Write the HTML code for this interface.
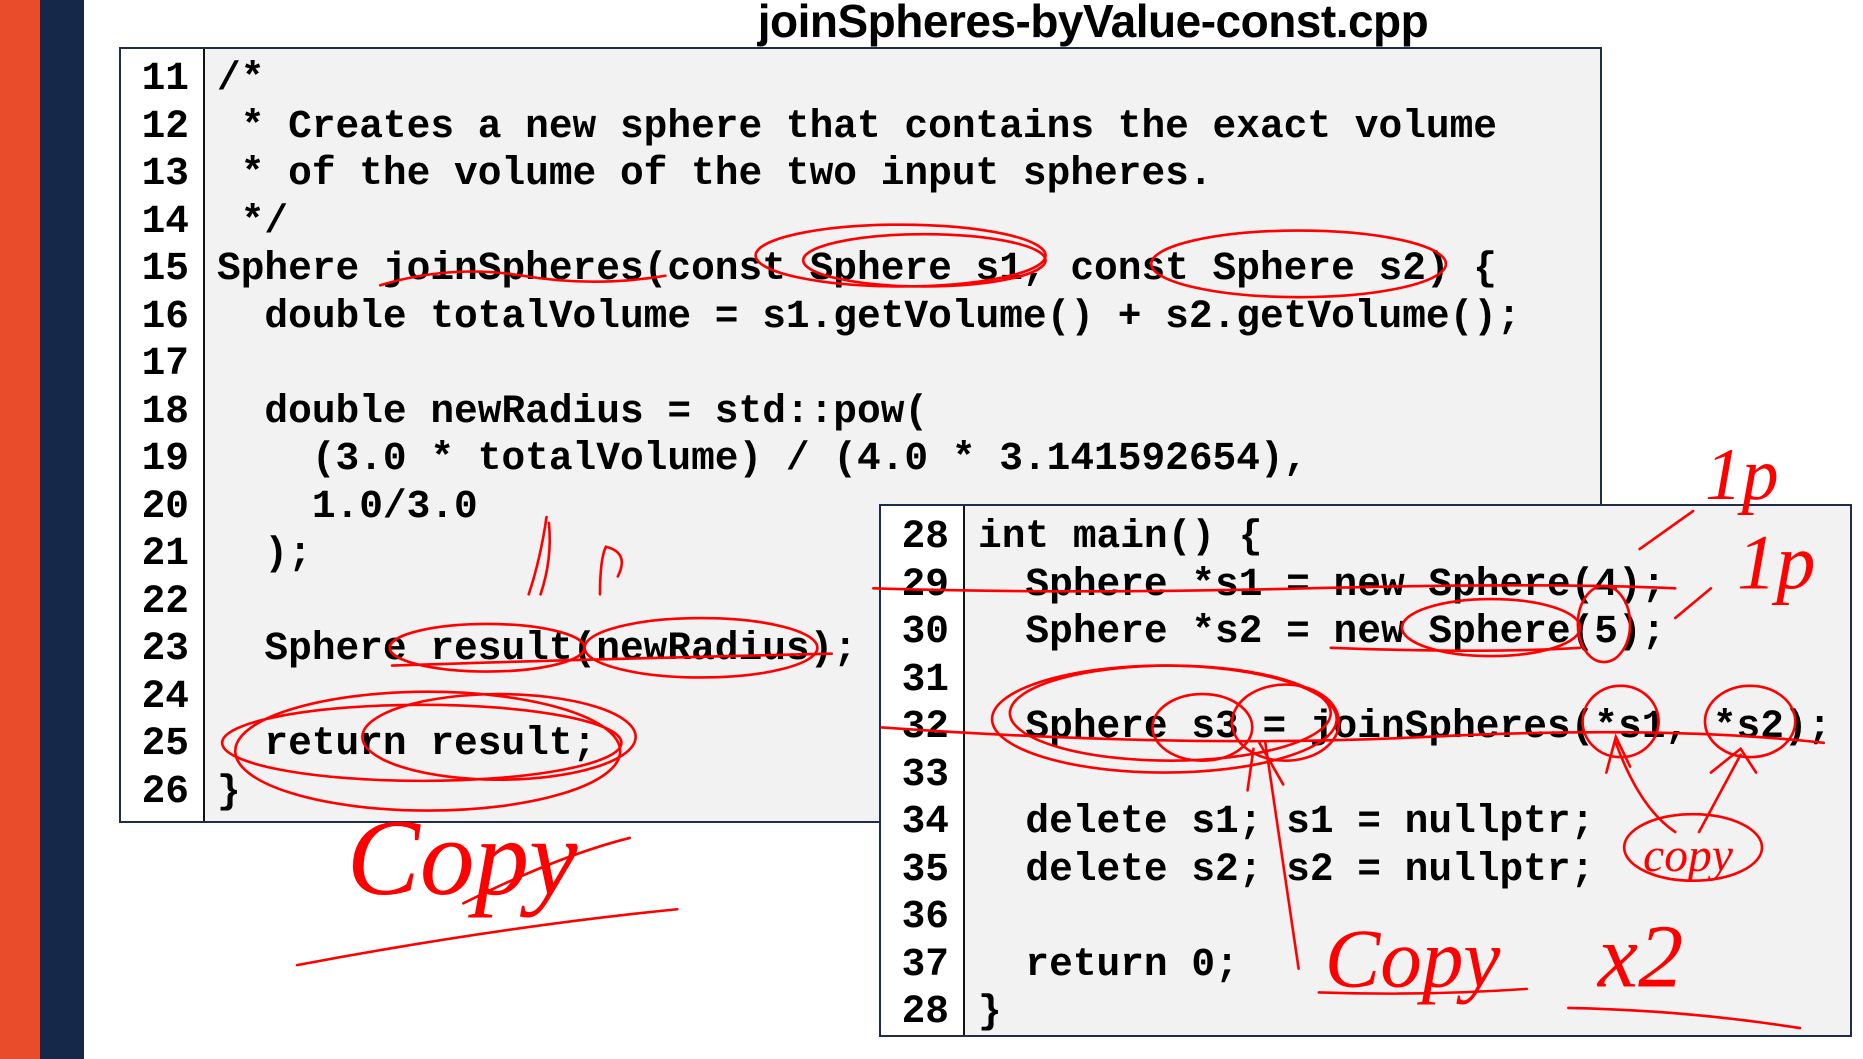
<!DOCTYPE html>
<html><head><meta charset="utf-8">
<style>
html,body{margin:0;padding:0;background:#fff;}
body{width:1863px;height:1059px;position:relative;overflow:hidden;font-family:"Liberation Sans",sans-serif;}
.or{position:absolute;left:0;top:0;width:40px;height:1059px;background:#e84c2a;}
.nv{position:absolute;left:40px;top:0;width:44px;height:1059px;background:#16284a;}
.title{position:absolute;left:700px;width:786px;top:-6px;text-align:center;font-weight:bold;font-size:46px;letter-spacing:-0.5px;color:#000;}
.box{position:absolute;background:#f2f2f2;border:2px solid #1f2d4a;box-sizing:border-box;}
.gut{position:absolute;top:0;bottom:0;border-right:2px solid #111;background:#fff;}
.code{position:absolute;font-family:"Liberation Mono","Courier New",monospace;font-weight:bold;font-size:39.5px;line-height:47.5px;white-space:pre;color:#000;}
.num{text-align:right;}
svg{position:absolute;left:0;top:0;}
</style></head><body>
<div class="or"></div><div class="nv"></div>
<div class="title">joinSpheres-byValue-const.cpp</div>

<div class="box" style="left:119px;top:47px;width:1483px;height:776px;">
  <div class="gut" style="left:0;width:82px;"></div>
  <div class="code num" style="left:0;width:68px;top:6px;">11
12
13
14
15
16
17
18
19
20
21
22
23
24
25
26</div>
  <div class="code" style="left:96px;top:6px;">/*
 * Creates a new sphere that contains the exact volume
 * of the volume of the two input spheres.
 */
Sphere joinSpheres(const Sphere s1, const Sphere s2) {
  double totalVolume = s1.getVolume() + s2.getVolume();

  double newRadius = std::pow(
    (3.0 * totalVolume) / (4.0 * 3.141592654),
    1.0/3.0
  );

  Sphere result(newRadius);

  return result;
}</div>
</div>

<div class="box" style="left:879px;top:504px;width:973px;height:533px;">
  <div class="gut" style="left:0;width:82px;"></div>
  <div class="code num" style="left:0;width:68px;top:7px;">28
29
30
31
32
33
34
35
36
37
28</div>
  <div class="code" style="left:97px;top:7px;">int main() {
  Sphere *s1 = new Sphere(4);
  Sphere *s2 = new Sphere(5);

  Sphere s3 = joinSpheres(*s1, *s2);

  delete s1; s1 = nullptr;
  delete s2; s2 = nullptr;

  return 0;
}</div>
</div>

<svg width="1863" height="1059" viewBox="0 0 1568 891" preserveAspectRatio="none" fill="none" stroke="#f00" stroke-width="2.2" stroke-linecap="round">
  <path d="M320 240 Q380 222 440 232 T560 232"/>
  <ellipse cx="758" cy="215" rx="122" ry="26"/>
  <ellipse cx="778" cy="219" rx="102" ry="22"/>
  <ellipse cx="1093" cy="222" rx="124" ry="28"/>
  <path d="M445 500 Q455 470 460 435 M455 500 Q465 470 462 440 M505 500 Q505 470 510 460 Q530 465 520 485"/>
  <ellipse cx="410" cy="545" rx="82" ry="20"/>
  <ellipse cx="590" cy="545" rx="98" ry="25"/>
  <path d="M330 560 Q480 555 700 550"/>
  <ellipse cx="355" cy="625" rx="168" ry="32"/>
  <ellipse cx="420" cy="620" rx="115" ry="36"/>
  <ellipse cx="360" cy="632" rx="162" ry="50"/>
  <path d="M250 812 Q420 780 570 765"/>
  <path d="M390 760 Q470 720 530 705"/>
  <path d="M735 495 Q900 500 1100 495 T1410 495"/>
  <path d="M742 612 Q1000 630 1200 620 T1535 625"/>
  <ellipse cx="980" cy="605" rx="145" ry="45"/>
  <ellipse cx="985" cy="600" rx="135" ry="40"/>
  <ellipse cx="1012" cy="612" rx="42" ry="28"/>
  <ellipse cx="1082" cy="608" rx="45" ry="32"/>
  <ellipse cx="1255" cy="528" rx="75" ry="24"/>
  <ellipse cx="1350" cy="525" rx="22" ry="32"/>
  <path d="M1120 545 Q1250 550 1330 545"/>
  <ellipse cx="1364" cy="607" rx="32" ry="30"/>
  <ellipse cx="1473" cy="607" rx="38" ry="30"/>
  <path d="M1065 625 L1093 815 M1055 630 L1050 665 M1060 625 L1080 660"/>
  <path d="M1360 625 Q1380 680 1410 700 M1352 650 L1360 620 L1372 645"/>
  <path d="M1465 635 L1430 700 M1440 650 L1465 630 L1478 650"/>
  <ellipse cx="1425" cy="713" rx="58" ry="28"/>
  <path d="M1110 835 Q1200 838 1285 832"/>
  <path d="M1320 848 Q1420 850 1515 865"/>
  <path d="M1380 462 L1425 430 M1410 520 L1440 495"/>
  <g fill="#f00" stroke="none" font-family="Liberation Serif, serif" font-style="italic">
    <text x="292" y="752" font-size="92">Copy</text>
    <text x="1383" y="733" font-size="40">copy</text>
    <text x="1115" y="830" font-size="70">Copy</text>
    <text x="1345" y="830" font-size="76">x2</text>
    <text x="1435" y="420" font-size="62">1p</text>
    <text x="1462" y="495" font-size="66">1p</text>
  </g>
</svg>
</body></html>
